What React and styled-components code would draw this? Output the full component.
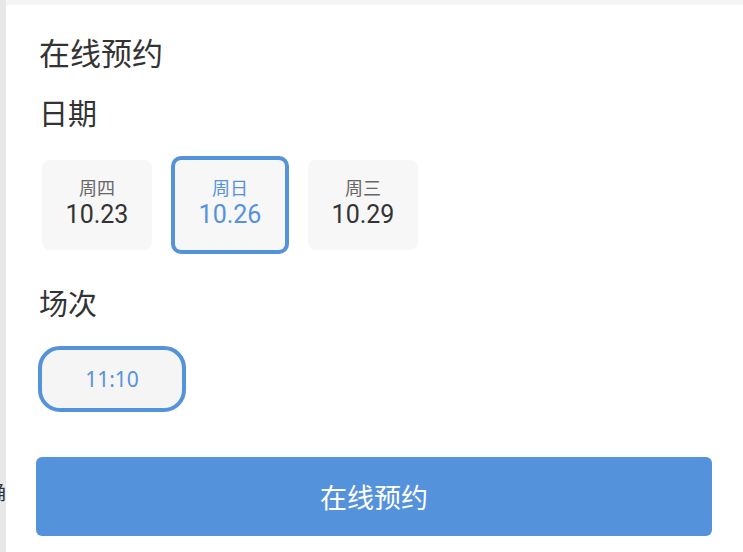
import React from "react";
import styled, { createGlobalStyle, css } from "styled-components";

const BLUE = "#5592dc";

const Global = createGlobalStyle`
  html, body { margin: 0; padding: 0; background: #ffffff; }
  body { font-family: "Noto Sans", "Noto Sans CJK SC", sans-serif; }
  * { box-sizing: border-box; }
`;

const Page = styled.div`
  display: flex;
  width: 743px;
  height: 552px;
  overflow: hidden;
`;

const BehindStrip = styled.div`
  width: 6px;
  flex-shrink: 0;
  background: #e8e8e8;
  display: flex;
  flex-direction: column;
  padding-top: 480px;
`;

const Peek = styled.div`
  display: flex;
  justify-content: flex-end;
  width: 6px;
  overflow: hidden;
  font-family: "Noto Sans CJK SC", sans-serif;
  font-size: 20px;
  line-height: 24px;
  color: #333;
  span { flex-shrink: 0; }
`;

const Main = styled.div`
  flex: 1;
  display: flex;
  flex-direction: column;
`;

const TopBar = styled.div`
  height: 5px;
  background: #f5f5f5;
  flex-shrink: 0;
`;

const Sheet = styled.div`
  flex: 1;
  background: #ffffff;
  padding: 29px 31px 0 30px;
  display: flex;
  flex-direction: column;
  align-items: flex-start;
`;

const Title = styled.h1`
  margin: 0 0 0 3px;
  font-family: "Noto Sans CJK SC", sans-serif;
  font-weight: 400;
  font-size: 31px;
  line-height: 36px;
  color: #333;
`;

const SectionLabel = styled.h2`
  margin: ${(p) => p.$top}px 0 0 3px;
  font-family: "Noto Sans CJK SC", sans-serif;
  font-weight: 400;
  font-size: 29px;
  line-height: 36px;
  color: #333;
`;

const DateRow = styled.div`
  display: flex;
  gap: 23px;
  margin: 30px 0 0 6px;
`;

const DateCard = styled.div`
  width: 110px;
  height: 90px;
  border-radius: 8px;
  background: #f7f7f7;
  display: flex;
  flex-direction: column;
  align-items: center;
  padding-top: 17px;
  gap: 3px;
  color: #333;
  ${(p) =>
    p.$active &&
    css`
      box-shadow: 0 0 0 4px ${BLUE};
      border-radius: 6px;
      color: ${BLUE};
    `}
`;

const DayName = styled.div`
  font-family: "Noto Sans CJK SC", sans-serif;
  font-size: 18px;
  line-height: 20px;
  color: ${(p) => (p.$active ? BLUE : "#666")};
`;

const DateNum = styled.div`
  font-family: Roboto, "Noto Sans", sans-serif;
  font-size: 25px;
  line-height: 29px;
`;

const SlotRow = styled.div`
  display: flex;
  gap: 20px;
  margin: 26px 0 0 2px;
`;

const Slot = styled.div`
  width: 148px;
  height: 66px;
  border: 4px solid ${BLUE};
  border-radius: 22px;
  background: #f6f5f5;
  display: flex;
  align-items: center;
  justify-content: center;
  font-family: "Noto Sans", sans-serif;
  font-size: 21px;
  color: ${BLUE};
`;

const SubmitButton = styled.button`
  margin-top: 45px;
  width: 676px;
  height: 79px;
  border: none;
  border-radius: 6px;
  background: ${BLUE};
  color: #ffffff;
  font-family: "Noto Sans CJK SC", sans-serif;
  font-size: 27px;
  display: flex;
  align-items: center;
  justify-content: center;
  padding: 0;
  cursor: pointer;
`;

const dates = [
  { day: "周四", date: "10.23" },
  { day: "周日", date: "10.26", active: true },
  { day: "周三", date: "10.29" },
];

export default function App() {
  return (
    <>
      <Global />
      <Page>
        <BehindStrip>
          <Peek>
            <span>确</span>
          </Peek>
        </BehindStrip>
        <Main>
          <TopBar />
          <Sheet>
            <Title>在线预约</Title>
            <SectionLabel $top={24}>日期</SectionLabel>
            <DateRow>
              {dates.map((d) => (
                <DateCard key={d.date} $active={d.active}>
                  <DayName $active={d.active}>{d.day}</DayName>
                  <DateNum>{d.date}</DateNum>
                </DateCard>
              ))}
            </DateRow>
            <SectionLabel $top={34}>场次</SectionLabel>
            <SlotRow>
              <Slot>11:10</Slot>
            </SlotRow>
            <SubmitButton>在线预约</SubmitButton>
          </Sheet>
        </Main>
      </Page>
    </>
  );
}
